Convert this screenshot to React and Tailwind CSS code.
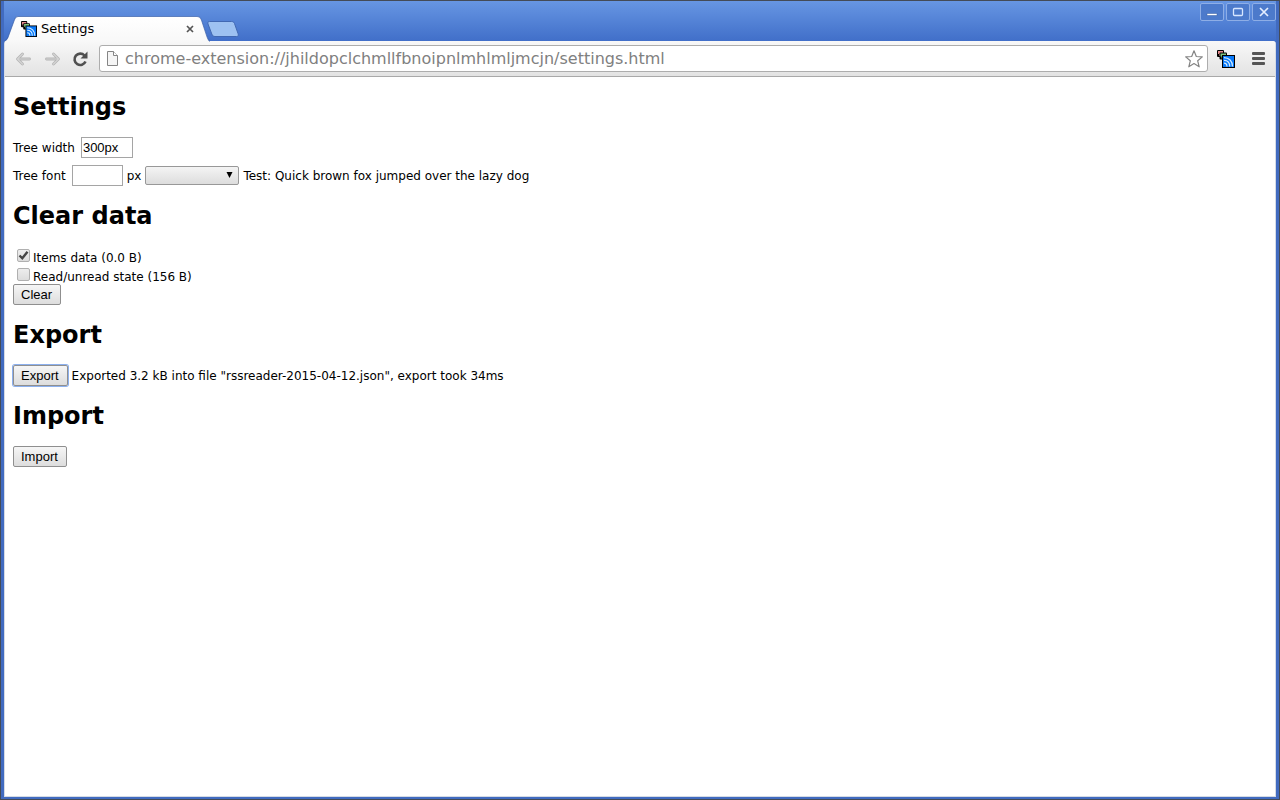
import React, { useState } from 'react';

const buttonClass =
  "h-[21px] pl-[7px] pr-2 border border-[#8f8f8f] rounded-[2px] bg-linear-to-b from-[#f6f6f6] to-[#dddddd] font-['Liberation_Sans',sans-serif] text-[13px] leading-4 text-black";
const inputClass =
  "h-[21px] px-px border border-[#a5a5a5] bg-white font-['Liberation_Sans',sans-serif] text-[13px] leading-4 text-black outline-none";
const windowButtonClass =
  'flex items-center justify-center w-6 h-[18px] border border-[#8eaee6] rounded-[2px] bg-[#4c7acb]';

// Stacked feed icon, used both in the tab and in the toolbar
const FeedIcon = ({ className }) => (
  <svg className={className} viewBox="0 0 18 18" aria-hidden="true">
    <rect width="7" height="7" rx="1" fill="#000" />
    <path d="M1 1h5v5H2V4H1z" fill="#e58a8c" />
    <rect x="2.500" y="2.500" width="7.500" height="7" rx="1" fill="#000" />
    <path d="M3.500 3.500h5.500v5H4.500V6.500h-1z" fill="#7fc47f" />
    <path d="M5 5h13v13H5z" fill="#000" />
    <path d="M6 6h11v11H6z" fill="#0879fa" />
    <g fill="none" stroke="#d5edff" strokeWidth="1.2">
      <path d="M7 7.600c5 0 8.500 3.500 8.500 8.900" />
      <path d="M7 10.400c3.500 0 5.700 2.400 5.700 6.100" />
      <path d="M7 13.200c1.800 0 3 1.200 3 3.300" />
    </g>
  </svg>
);

const TitleBar = () => (
  <div className="flex items-start justify-between h-10 bg-linear-to-b from-[#6796e3] to-[#416fc9]">
    <div className="flex h-10 pt-[15px] items-start">
      <div className="relative flex items-center w-[206px] h-[26px] pl-[17px] pr-[14px]">
        <svg className="absolute inset-0 w-full h-full" viewBox="0 0 206 25" preserveAspectRatio="none" aria-hidden="true">
          <defs>
            <linearGradient id="tab" x1="0" y1="0" x2="0" y2="1">
              <stop offset="0" stopColor="#ffffff" />
              <stop offset="1" stopColor="#f8f8f8" />
            </linearGradient>
          </defs>
          <path
            d="M0 25c2-1 3-2 4-4L10.500 3.500C11.500 1 12.500.5 14 .5h179c2.500 0 3.500 1 4.500 3.500L203 20c1 3 2 4 3 5z"
            fill="url(#tab)"
          />
          <path
            d="M0 24.500c2-1 3-2 4-4L10.500 3.500C11.500 1 12.500.5 14 .5h179c2.500 0 3.500 1 4.500 3.500L203 20c1 3 2 4 3 4.500"
            fill="none"
            stroke="#3d62aa"
            strokeOpacity=".7"
          />
        </svg>
        <FeedIcon className="relative w-4 h-4" />
        <span className="relative ml-1 flex-1 text-[13px] leading-4">Settings</span>
        <button type="button" aria-label="Close tab" className="relative flex items-center justify-center w-3 h-4">
          <svg className="w-2 h-2" viewBox="0 0 8 8">
            <path d="M1 1l6 6M7 1L1 7" stroke="#555" strokeWidth="1.7" />
          </svg>
        </button>
      </div>
      <button type="button" aria-label="New tab" className="-ml-[3px] mt-[5px]">
        <svg className="w-8 h-4" viewBox="0 0 32 16">
          <path d="M2.500.5h22c2 0 2.500 1 3 2l3.500 10c.7 2 .2 3-1.500 3H8c-2 0-2.500-1-3.200-2.500L1 3C.5 1.500 1 .5 2.500.5z" fill="#9dc1f1" stroke="#4168b2" />
        </svg>
      </button>
    </div>
    <div className="flex gap-[2px] pt-[2px]">
      <button type="button" aria-label="Minimize" className={windowButtonClass}>
        <svg className="w-3 h-3" viewBox="0 0 12 12">
          <path d="M1 7.500h10v2H1z" fill="#fff" stroke="#345c9f" strokeWidth=".5" />
        </svg>
      </button>
      <button type="button" aria-label="Maximize" className={windowButtonClass}>
        <svg className="w-3 h-3" viewBox="0 0 12 12" fill="none">
          <rect x="1.500" y="2.500" width="9" height="7" rx="1" stroke="#d7e6ff" strokeWidth="1.300" />
        </svg>
      </button>
      <button type="button" aria-label="Close" className={windowButtonClass}>
        <svg className="w-3 h-3" viewBox="0 0 12 12">
          <path d="M2 2l8 8M10 2l-8 8" stroke="#e4eeff" strokeWidth="1.700" />
        </svg>
      </button>
    </div>
  </div>
);

const Toolbar = () => (
  <div className="flex items-center h-9 px-[10px] rounded-t-[3px] bg-linear-to-b from-[#f8f8f8] to-[#e3e3e3] border-b border-[#a9a9a9]">
    <button type="button" aria-label="Back" className="w-[17px] h-4">
      <svg className="w-[17px] h-4" viewBox="0 0 17 16" fill="none" strokeLinecap="round" strokeLinejoin="round">
        <path d="M7.500 3L2.500 8L7.500 13M3 8h11.500" stroke="#b4b4b4" strokeWidth="2.800" />
        <path d="M7.500 3L2.500 8L7.500 13M3 8h11.500" stroke="#d4d4d4" strokeWidth="1.200" />
      </svg>
    </button>
    <button type="button" aria-label="Forward" className="ml-3 w-[17px] h-4">
      <svg className="w-[17px] h-4" viewBox="0 0 17 16" fill="none" strokeLinecap="round" strokeLinejoin="round">
        <path d="M9.500 3L14.500 8L9.500 13M14 8H2.500" stroke="#b4b4b4" strokeWidth="2.800" />
        <path d="M9.500 3L14.500 8L9.500 13M14 8H2.500" stroke="#d4d4d4" strokeWidth="1.200" />
      </svg>
    </button>
    <button type="button" aria-label="Reload" className="ml-[11px] w-4 h-4">
      <svg className="w-4 h-4" viewBox="0 0 16 16" fill="none">
        <path d="M12.500 4.500A5.700 5.700 0 1 0 13.500 10.500" stroke="#505050" strokeWidth="2.600" />
        <path d="M15.500 .5v7H8.500z" fill="#505050" />
      </svg>
    </button>
    <div className="flex flex-1 items-center h-[27px] ml-[11px] pl-[7px] pr-1 border border-[#adadad] rounded-[3px] bg-white">
      <svg className="w-[11px] h-[15px]" viewBox="0 0 11 15">
        <path d="M.5.5h6l4 4v10H.5z" fill="#f5f5f5" stroke="#858585" />
        <path d="M6.500.5v4h4" fill="#fff" stroke="#858585" />
      </svg>
      <input
        aria-label="Address"
        className="flex-1 min-w-0 ml-[7px] h-5 text-base leading-5 text-[#808080] bg-transparent outline-none"
        defaultValue="chrome-extension://jhildopclchmllfbnoipnlmhlmljmcjn/settings.html"
      />
      <button type="button" aria-label="Bookmark this page" className="w-[18px] h-[18px]">
        <svg className="w-[18px] h-[18px]" viewBox="0 0 18 18">
          <path d="M9 .8l2.300 5.700 6 .4-4.600 3.900 1.500 6L9 13.600l-5.200 3.200 1.500-6L.7 6.900l6-.4z" fill="#fff" stroke="#848484" strokeWidth="1.200" strokeLinejoin="round" />
        </svg>
      </button>
    </div>
    <button type="button" aria-label="RSS reader" className="ml-[9px] w-[18px] h-[18px]">
      <FeedIcon className="w-[18px] h-[18px]" />
    </button>
    <button type="button" aria-label="Menu" className="ml-[17px] flex flex-col gap-[2px] w-[13px]">
      <span className="w-full h-[3px] rounded-[1px] bg-[#555555]" />
      <span className="w-full h-[3px] rounded-[1px] bg-[#555555]" />
      <span className="w-full h-[3px] rounded-[1px] bg-[#555555]" />
    </button>
  </div>
);

const Section = ({ title, children }) => (
  <section>
    <h1 className="mb-4 text-2xl leading-7 font-bold">{title}</h1>
    {children}
  </section>
);

const Checkbox = ({ id, checked, onChange, children }) => (
  <div className="flex items-end h-[19px] pl-1">
    <span className="relative mb-[3px] w-[13px] h-[13px]">
      <input
        id={id}
        type="checkbox"
        checked={checked}
        onChange={(e) => onChange(e.target.checked)}
        className="block appearance-none w-[13px] h-[13px] border border-[#b0b0b0] rounded-[2px] bg-linear-to-b from-[#ededed] to-[#dcdcdc]"
      />
      {checked && (
        <svg className="absolute inset-0 w-[13px] h-[13px] pointer-events-none" viewBox="0 0 13 13" fill="none">
          <path d="M2.500 6.500L5.300 9.300L10.500 2.800" stroke="#444" strokeWidth="2.400" />
        </svg>
      )}
    </span>
    <label htmlFor={id} className="ml-[3px]">{children}</label>
  </div>
);

export default function App() {
  const [width, setWidth] = useState('300px');
  const [fontSize, setFontSize] = useState('');
  const [clearItems, setClearItems] = useState(true);
  const [clearState, setClearState] = useState(false);

  return (
    <div className="flex flex-col min-h-screen border border-[#444b57] bg-[#416bc0] px-[3px] pb-[2px] font-['DejaVu_Sans',sans-serif] text-xs leading-[14px] text-black">
      <TitleBar />
      <div className="flex flex-col flex-1 border-x border-b border-[#d5dbe5] rounded-t-[3px] bg-white">
        <Toolbar />
        <main className="flex flex-col gap-4 px-2 py-4">
          <Section title="Settings">
            <div className="flex items-center">
              <label htmlFor="tree-width">Tree width</label>
              <input
                id="tree-width"
                className={`${inputClass} w-[52px] ml-1.5`}
                value={width}
                onChange={(e) => setWidth(e.target.value)}
              />
            </div>
            <div className="flex items-center mt-[7px]">
              <label htmlFor="tree-font">Tree font</label>
              <input
                id="tree-font"
                className={`${inputClass} w-[51px] ml-1.5`}
                value={fontSize}
                onChange={(e) => setFontSize(e.target.value)}
              />
              <span className="ml-1">px</span>
              <span className="relative ml-1">
                <select
                  aria-label="Font family"
                  className="block appearance-none w-[94px] h-[19px] border border-[#989898] rounded-[2px] bg-linear-to-b from-[#f4f4f4] to-[#dddddd]"
                >
                  <option value=""></option>
                </select>
                <svg className="absolute right-[6px] top-[6px] w-[7px] h-[6px] pointer-events-none" viewBox="0 0 7 6">
                  <path d="M.5 0h6L3.500 6z" fill="#000" />
                </svg>
              </span>
              <span className="ml-1">Test: Quick brown fox jumped over the lazy dog</span>
            </div>
          </Section>

          <Section title="Clear data">
            <Checkbox id="clear-items" checked={clearItems} onChange={setClearItems}>Items data (0.0 B)</Checkbox>
            <Checkbox id="clear-state" checked={clearState} onChange={setClearState}>Read/unread state (156 B)</Checkbox>
            <button type="button" className={`${buttonClass} block`}>Clear</button>
          </Section>

          <Section title="Export">
            <div className="flex items-center">
              <button type="button" className={`${buttonClass} border-[#6d92da] ring-1 ring-[#8cb0ee]`}>Export</button>
              <span className="ml-1">Exported 3.2 kB into file "rssreader-2015-04-12.json", export took 34ms</span>
            </div>
          </Section>

          <Section title="Import">
            <button type="button" className={`${buttonClass} block`}>Import</button>
          </Section>
        </main>
      </div>
    </div>
  );
}
